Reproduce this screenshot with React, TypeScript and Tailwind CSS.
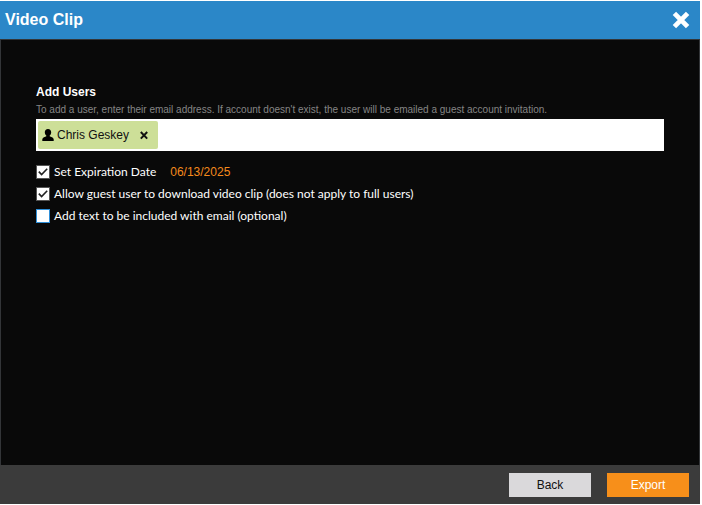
import { useState, type ReactNode } from "react";

type CheckRowProps = {
    id: string;
    label: string;
    checked: boolean;
    onChange: (checked: boolean) => void;
    children?: ReactNode;
};

function CheckRow({ id, label, checked, onChange, children }: CheckRowProps) {
    return (
        <div className="flex h-[22px] items-center">
            <span className="grid">
                <input
                    id={id}
                    type="checkbox"
                    checked={checked}
                    onChange={(e) => onChange(e.target.checked)}
                    className="peer col-start-1 row-start-1 size-[14px] appearance-none border border-[#2f8fd8] bg-white checked:border-[#555555]"
                />
                <svg
                    viewBox="0 0 14 14"
                    className="pointer-events-none invisible col-start-1 row-start-1 size-[14px] peer-checked:visible"
                    fill="none"
                    stroke="#222222"
                    strokeWidth="1.6"
                    aria-hidden="true"
                >
                    <path d="M2.8 6.6 L5.6 9.6 L11.2 3.8" />
                </svg>
            </span>
            <label
                htmlFor={id}
                className="ml-1 whitespace-nowrap font-['Lato',sans-serif] text-[12px] leading-[18px] text-white"
            >
                {label}
            </label>
            {children}
        </div>
    );
}

function UserChip({ name, onRemove }: { name: string; onRemove: () => void }) {
    return (
        <span className="flex h-7 items-center rounded-xs bg-[#cddf98] pr-[7px] pl-1 text-[12px] text-[#111111]">
            <svg viewBox="0 0 12 12" className="size-3" fill="#000000" aria-hidden="true">
                <path d="M6 0C4 0 2.8 1.4 2.8 3.3C2.8 4.8 3.5 5.9 4.3 6.5V7.3C3.2 7.9 .6 8.2 .3 10.2V12H11.7V10.2C11.4 8.2 8.8 7.9 7.7 7.3V6.5C8.5 5.9 9.2 4.8 9.2 3.3C9.2 1.4 8 0 6 0Z" />
            </svg>
            <span className="ml-[3px]">{name}</span>
            <button type="button" aria-label={`Remove ${name}`} onClick={onRemove} className="ml-2 p-0.5">
                <svg viewBox="0 0 10 10" className="size-[10px]" stroke="#111111" strokeWidth="2" aria-hidden="true">
                    <path d="M1.8 2 L8.2 8.6 M8.2 2 L1.8 8.6" />
                </svg>
            </button>
        </span>
    );
}

export default function App() {
    const [users, setUsers] = useState(["Chris Geskey"]);
    const [email, setEmail] = useState("");
    const [expires, setExpires] = useState(true);
    const [allowDownload, setAllowDownload] = useState(true);
    const [includeText, setIncludeText] = useState(false);

    return (
        <div className="flex min-h-screen bg-white pt-px pr-0.5 pb-px font-['Liberation_Sans',Arial,sans-serif]">
            <div className="flex flex-1 flex-col bg-[#090909]">
                <header className="flex h-[38px] shrink-0 items-center justify-between bg-[#2b87c8] pr-[10px] pl-[5px]">
                    <h1 className="text-[16px] font-bold text-white">Video Clip</h1>
                    <button type="button" aria-label="Close">
                        <svg viewBox="0 0 18 18" className="size-[18px]" stroke="#ffffff" strokeWidth="4.8" aria-hidden="true">
                            <path d="M2.4 2.4 L15.6 15.6 M15.6 2.4 L2.4 15.6" />
                        </svg>
                    </button>
                </header>

                <main className="flex-1 border-x border-t border-[#333538] px-[35px] pt-[43px]">
                    <h2 className="text-[12px] leading-[18px] font-bold text-white">
                        <label htmlFor="users">Add Users</label>
                    </h2>
                    <p className="text-[10px] leading-[18px] whitespace-nowrap text-[#858585]">
                        To add a user, enter their email address. If account doesn't exist, the user will be emailed a
                        guest account invitation.
                    </p>
                    <div className="flex h-8 items-center bg-white px-0.5">
                        {users.map((name) => (
                            <UserChip
                                key={name}
                                name={name}
                                onRemove={() => setUsers(users.filter((u) => u !== name))}
                            />
                        ))}
                        <input
                            id="users"
                            type="text"
                            value={email}
                            onChange={(e) => setEmail(e.target.value)}
                            className="h-7 min-w-0 flex-1 px-2 text-[12px] text-black outline-none"
                        />
                    </div>

                    <div className="mt-[10px]">
                        <CheckRow id="expires" label="Set Expiration Date" checked={expires} onChange={setExpires}>
                            <button type="button" className="ml-[14px] text-[12px] text-[#f58a1c]">
                                06/13/2025
                            </button>
                        </CheckRow>
                        <CheckRow
                            id="download"
                            label="Allow guest user to download video clip (does not apply to full users)"
                            checked={allowDownload}
                            onChange={setAllowDownload}
                        />
                        <CheckRow
                            id="message"
                            label="Add text to be included with email (optional)"
                            checked={includeText}
                            onChange={setIncludeText}
                        />
                    </div>
                </main>

                <footer className="flex h-[39px] shrink-0 items-center justify-end gap-4 bg-[#3b3b3b] pr-[11px] text-[12px]">
                    <button type="button" className="h-6 w-[82px] bg-[#dad9db] text-[#111111]">
                        Back
                    </button>
                    <button type="button" className="h-6 w-[82px] bg-[#f78f1a] text-white">
                        Export
                    </button>
                </footer>
            </div>
        </div>
    );
}
